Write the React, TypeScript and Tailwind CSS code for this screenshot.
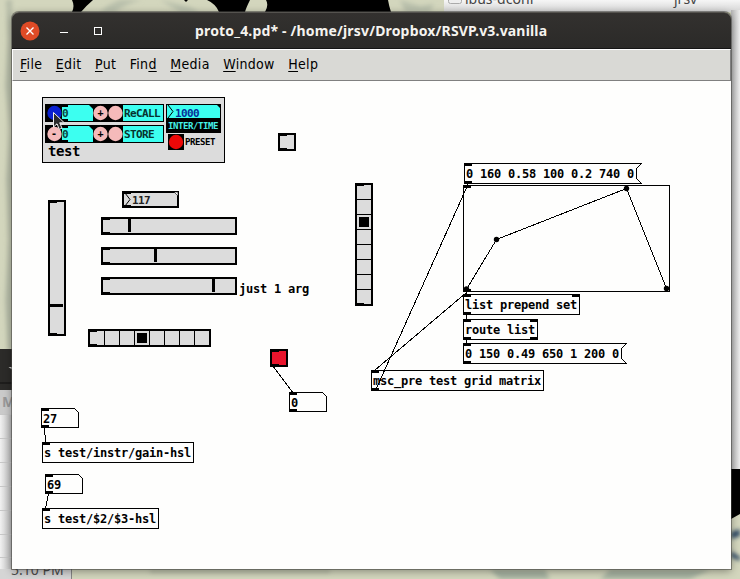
import React from "react";

const mono = "font-['DejaVu_Sans_Mono','Liberation_Mono',monospace] font-bold text-black whitespace-pre";

function Iolet({ className }: { className: string }) {
  return <i className={`absolute block h-[3px] w-[8px] bg-black ${className}`} />;
}

function ObjectBox({ className, label, outs = "bottom-[-1px] left-[-1px]", extra }: { className: string; label: string; outs?: string; extra?: React.ReactNode }) {
  return (
    <div className={`absolute h-[21px] border border-black pl-px text-[12px] leading-[21px] tracking-[-0.224px] ${mono} ${className}`}>
      {label}
      <Iolet className="-left-px -top-px" />
      {outs && <Iolet className={outs} />}
      {extra}
    </div>
  );
}

function NumberBox({ className, value }: { className: string; value: string }) {
  return (
    <div className={`absolute h-[20px] w-[38px] pl-[2px] text-[12px] leading-[22px] tracking-[-0.224px] ${mono} ${className}`}>
      <svg className="absolute inset-0" width="38" height="20" fill="none" stroke="#000" shapeRendering="crispEdges">
        <path d="M.5 .5H33.5L37.5 4.5V19.5H.5Z" />
      </svg>
      {value}
      <Iolet className="left-0 top-0" />
      <Iolet className="bottom-0 left-0" />
    </div>
  );
}

function MessageBox({ className, label, width }: { className: string; label: string; width: number }) {
  return (
    <div className={`absolute h-[21px] pl-[2px] text-[12px] leading-[22px] tracking-[-0.224px] ${mono} ${className}`}>
      <svg className="absolute inset-0" width={width} height="21" fill="none" stroke="#000" shapeRendering="crispEdges">
        <path d={`M.5 .5H${width - 0.5}L${width - 5.5} 5.5V15.5L${width - 0.5} 20.5H.5Z`} />
      </svg>
      {label}
      <Iolet className="left-0 top-0" />
      <Iolet className="bottom-0 left-0" />
    </div>
  );
}

function Widget({ className, children }: { className: string; children?: React.ReactNode }) {
  return (
    <div className={`absolute border-2 border-black bg-[#dcdcdc] ${className}`}>
      <Iolet className="-left-[1px] -top-[2px]" />
      <Iolet className="-bottom-[2px] -left-[1px]" />
      {children}
    </div>
  );
}

function Bang({ fill, sign, size = "w-[15px]" }: { fill: string; sign?: string; size?: string }) {
  return (
    <div className={`grid h-[16px] place-items-center bg-black ${size}`}>
      <svg className="col-start-1 row-start-1" width="15" height="16" viewBox="0 0 15 16">
        <circle cx="7.5" cy="8" r="7.2" fill={fill} />
      </svg>
      <span className={`z-10 col-start-1 row-start-1 text-[10px] leading-[16px] ${mono}`}>{sign}</span>
    </div>
  );
}

function PresetRow({ first, sign, label }: { first: string; sign?: string; label: string }) {
  return (
    <div className="flex h-[18px] w-[119px] border border-black bg-[#3cfff0]">
      <Bang fill={first} sign={sign} size="w-[16px]" />
      <div className={`relative w-[31px] text-[11px] leading-[17px] ${mono}`}>
        <i className="absolute left-0 top-0 h-[2px] w-[6px] bg-black" />
        <i className="absolute bottom-0 left-0 h-[2px] w-[6px] bg-black" />
        <svg className="absolute right-0 top-0" width="4" height="4"><path d="M0 0H4V4Z" /></svg>
        <span className="text-[#0b4540]">0</span>
      </div>
      <Bang fill="#f5baba" sign="+" />
      <Bang fill="#f5baba" />
      <span className={`pl-[1px] text-[11px] leading-[17px] tracking-[-0.62px] ${mono} !text-[#06332f]`}>{label}</span>
    </div>
  );
}

function Preset() {
  return (
    <div className="absolute left-[30px] top-[16px] h-[66px] w-[183px] border border-black bg-[#dcdcdc] pl-[2px] pt-[6px]">
      <div className="flex gap-[2px]">
        <div className="flex flex-col gap-[3px]">
          <PresetRow first="#0a20d0" label="ReCALL" />
          <PresetRow first="#f5baba" sign="-" label="STORE" />
          <div className={`-mt-[3px] pl-[3px] text-[14px] leading-[16px] tracking-[-0.43px] ${mono}`}>test</div>
        </div>
        <div className="flex w-[55px] flex-col">
          <div className={`relative h-[15px] border border-black bg-[#3cfff0] pl-[8px] text-[11px] leading-[17px] tracking-[-0.62px] ${mono} !text-[#08309a]`}>
            <svg className="absolute left-0 top-0" width="7" height="13" fill="none" stroke="#000"><path d="M1 0L6 6.5L1 13" /></svg>
            <svg className="absolute right-0 top-0" width="3" height="3"><path d="M0 0H3V3Z" /></svg>
            1000
          </div>
          <div className="h-[14px] bg-black pl-[2px] font-['DejaVu_Sans_Mono',monospace] text-[9px] font-bold leading-[14px] tracking-[-0.42px] text-[#45f0e6]">INTER/TIME</div>
          <div className="flex h-[17px] items-start pl-[2px] pt-px">
            <div className="h-[16px] w-[16px] shrink-0 bg-black">
              <svg width="16" height="16"><circle cx="8" cy="8" r="7.2" fill="#ec0808" /></svg>
            </div>
            <span className={`pl-px text-[9px] leading-[16px] tracking-[-0.42px] ${mono}`}>PRESET</span>
          </div>
        </div>
      </div>
      <svg className="absolute left-[9px] top-[13px]" width="16" height="22">
        <path d="M1.5 1.5V16L5 12.8L7.3 18.3L10 17.2L7.7 11.8H12.3Z" fill="#2b2b2b" stroke="#eee" strokeWidth="1" />
      </svg>
    </div>
  );
}

function RadioCells({ vertical }: { vertical?: boolean }) {
  return (
    <div className={`flex h-full w-full ${vertical ? "flex-col" : ""}`}>
      {[0, 1, 2, 3, 4, 5, 6, 7].map((n) => (
        <div
          key={n}
          className={`flex shrink-0 items-center justify-center border-black ${vertical ? "h-[15px] w-[14px]" : "h-[14px] w-[15px]"} ${n < 7 ? (vertical ? "border-b" : "border-r") : ""}`}
        >
          {n === (vertical ? 2 : 3) && <i className="block h-[10px] w-[10px] bg-black" />}
        </div>
      ))}
    </div>
  );
}

function Desktop() {
  return (
    <svg className="absolute inset-0" width="740" height="579">
      <defs>
        <filter id="soft"><feGaussianBlur stdDeviation="2.2" /></filter>
        <linearGradient id="edge" x1="0" x2="1"><stop offset="0" stopColor="#f1f1f1" /><stop offset="1" stopColor="#b7b7b7" /></linearGradient>
        <linearGradient id="edgeR" x1="0" x2="1"><stop offset="0" stopColor="#b5b5b5" /><stop offset="1" stopColor="#ededed" /></linearGradient>
        <linearGradient id="top" x1="0" x2="0" y1="0" y2="1"><stop offset="0" stopColor="#f6f6f6" /><stop offset="1" stopColor="#d4d4d4" /></linearGradient>
      </defs>
      <rect width="740" height="579" fill="#d3d6bd" />
      <g filter="url(#soft)">
        <path d="M6 0L8 40L5 86L10 130L6 180L9 240L5 300L8 350H12V0Z" fill="#b6bca8" />
        <path d="M100 12Q110 3 120 0H142Q125 4 115 12ZM160 0L190 7L200 12H180ZM400 0L420 6L434 4L430 12H405Z" fill="#b9c0ac" />
        <path d="M490 570H545L550 579H500ZM610 570H710L690 579H600Z" fill="#a6b2a1" />
        <path d="M150 570H330V573H150Z" fill="#b4b9a4" />
      </g>
      <path d="M72 0H93Q87 5 81 12H72Q75 6 72 0ZM184 0H188L186 2ZM207 0H250Q246 8 245 12H219Q216 4 207 0ZM266 0Q269 5 265 12H391Q389 6 388 0Z" fill="#000" />
      <rect x="444" width="296" height="12" fill="url(#top)" />
      <rect x="731" y="10" width="9" height="460" fill="url(#edgeR)" />
      <path d="M731 469H740V514L731 519Z" fill="#000" />
      <g filter="url(#soft)"><path d="M731 532L740 529V536L731 539ZM731 551L740 557V561L731 557Z" fill="#2f4a66" /></g>
      <rect y="349" width="12" height="41" fill="#2c2b29" />
      <path d="M0 383H12" stroke="#111" />
      <path d="M8.5 367H12V369.5Z" fill="#ccc" />
      <rect y="390" width="12" height="25" fill="#cacaca" />
      <rect y="415" width="12" height="164" fill="url(#edge)" />
      <rect y="569" width="72" height="10" fill="#d5d5d5" />
      <path d="M71.5 569V579" stroke="#858585" />
      <path d="M0 414.500H12M0 438.500H12M0 462.500H12M0 486.500H12M0 510.500H12M0 534.500H12M0 557.500H12" stroke="#c7c7c7" />
      <rect x="448.500" y="-7.500" width="13" height="11" rx="2" fill="#eee" stroke="#aaa" />
      <path d="M453 -.5H458" stroke="#aaa" />
    </svg>
  );
}

const menus = [
  ["", "F", "ile"],
  ["", "E", "dit"],
  ["", "P", "ut"],
  ["Fin", "d", ""],
  ["", "M", "edia"],
  ["", "W", "indow"],
  ["", "H", "elp"],
];

export default function App() {
  return (
    <div className="relative h-[579px] w-[740px] overflow-hidden">
      <Desktop />
      <span className="absolute left-[465px] top-[-10px] font-['Noto_Sans',sans-serif] text-[14px] leading-[18px] text-[#444]">ibus-dconf</span>
      <span className="absolute left-[674px] top-[-10px] font-['Noto_Sans',sans-serif] text-[14px] leading-[18px] text-[#444]">jrsv</span>
      <span className="absolute left-[2px] top-[393px] font-['Noto_Sans',sans-serif] text-[14px] font-bold leading-[18px] text-[#999]">M</span>
      <span className="absolute left-[11px] top-[561px] font-['Noto_Sans',sans-serif] text-[14px] leading-[18px] text-[#4a4a4a]">5:10 PM</span>

      <div className="absolute left-[12px] top-[12px] flex h-[557px] w-[719px] flex-col rounded-t-[7px] shadow-[0_0_0_1px_rgba(70,70,65,0.55),0_2px_9px_rgba(0,0,0,0.4)]">
        <div className="flex h-[37px] items-center rounded-t-[7px] border-b border-t border-b-[#151515] border-t-[#55534f] bg-gradient-to-b from-[#33312f] to-[#2b2a28] pl-[8px]">
          <svg width="20" height="20" className="shrink-0">
            <circle cx="10" cy="10" r="9.500" fill="#df4b26" />
            <path d="M6.500 6.500L13.500 13.500M13.500 6.500L6.500 13.500" stroke="#fff" strokeWidth="1.400" />
          </svg>
          <i className="ml-[20px] mt-[4px] block h-px w-[8px] bg-white" />
          <i className="ml-[26px] block h-[8px] w-[8px] border border-white" />
          <span className="ml-[93px] whitespace-nowrap font-['Noto_Sans',sans-serif] text-[14px] font-bold leading-[20px] tracking-[0.17px] text-[#f5f3ef]">proto_4.pd* - /home/jrsv/Dropbox/RSVP.v3.vanilla</span>
        </div>
        <div className="flex h-[32px] gap-[13.5px] border-b border-l border-r border-t border-b-[#808080] border-l-white border-r-[#808080] border-t-white bg-[#d9d9d5] pl-[7px] font-['DejaVu_Sans_Condensed','DejaVu_Sans',sans-serif] text-[14px] leading-[28px] tracking-[0.32px] text-black [font-stretch:condensed]">
          {menus.map(([before, key, after]) => (
            <span key={before + key + after}>
              {before}
              <span className="underline decoration-1 underline-offset-2 [text-decoration-skip-ink:none]">{key}</span>
              {after}
            </span>
          ))}
        </div>

        <div className="relative flex-1 overflow-hidden bg-[#fefefd]">
          <Preset />
          <Widget className="left-[266px] top-[52px] h-[18px] w-[18px]" />
          <Widget className="left-[36px] top-[119px] h-[136px] w-[18px]">
            <i className="mt-[102px] block h-[3px] w-[13px] bg-black" />
          </Widget>
          <Widget className="left-[110px] top-[110px] h-[17px] w-[57px]">
            <svg className="absolute left-0 top-0" width="7" height="13" fill="none" stroke="#000"><path d="M1 0L6 6.500L1 13" /></svg>
            <svg className="absolute -right-px -top-px" width="4" height="4"><path d="M0 0H4V4Z" fill="#fff" stroke="#000" strokeWidth=".6" /></svg>
            <div className={`pl-[8px] text-[11px] leading-[15px] tracking-[-0.62px] ${mono} !text-[#222]`}>117</div>
          </Widget>
          <Widget className="left-[89px] top-[136px] h-[18px] w-[136px]"><i className="ml-[25px] block h-[13px] w-[3px] bg-black" /></Widget>
          <Widget className="left-[89px] top-[166px] h-[18px] w-[136px]"><i className="ml-[51px] block h-[13px] w-[3px] bg-black" /></Widget>
          <Widget className="left-[89px] top-[196px] h-[18px] w-[136px]"><i className="ml-[109px] block h-[13px] w-[3px] bg-black" /></Widget>
          <span className={`absolute left-[227px] top-[198px] text-[12px] leading-[20px] tracking-[-0.224px] ${mono}`}>just 1 arg</span>
          <Widget className="left-[76px] top-[248px] h-[18px] w-[123px]"><RadioCells /></Widget>
          <Widget className="left-[343px] top-[102px] h-[123px] w-[18px]"><RadioCells vertical /></Widget>

          <div className="absolute left-[258px] top-[268px] h-[18px] w-[18px] border-2 border-black bg-[#e9142c]">
            <Iolet className="-left-px -top-[2px]" />
            <Iolet className="-bottom-[2px] -left-px" />
          </div>
          <NumberBox className="left-[277px] top-[311px]" value="0" />
          <NumberBox className="left-[29px] top-[327px]" value="27" />
          <NumberBox className="left-[33px] top-[393px]" value="69" />
          <ObjectBox className="left-[30px] top-[361px] w-[152px]" label="s test/instr/gain-hsl" outs="" />
          <ObjectBox className="left-[30px] top-[427px] w-[117px]" label="s test/$2/$3-hsl" outs="" />

          <MessageBox className="left-[452px] top-[82px] w-[178px]" width={178} label="0 160 0.58 100 0.2 740 0" />
          <MessageBox className="left-[451px] top-[262px] w-[164px]" width={164} label="0 150 0.49 650 1 200 0" />
          <ObjectBox className="left-[451px] top-[213px] w-[117px]" label="list prepend set" extra={<Iolet className="-right-px -top-px" />} />
          <ObjectBox className="left-[451px] top-[238px] w-[75px]" label="route list" extra={<><Iolet className="-right-px -top-px" /><Iolet className="-bottom-px -right-px" /></>} />
          <ObjectBox className="left-[359px] top-[289px] w-[173px]" label="msc_pre test grid matrix" />
          <div className="absolute left-[451px] top-[104px] h-[107px] w-[207px] border border-black">
            <Iolet className="-left-px -top-px" />
            <Iolet className="-bottom-px -left-px" />
          </div>

          <svg className="absolute left-0 top-0" width="719" height="488" fill="none" stroke="#000">
            <g shapeRendering="crispEdges">
              <path d="M454.500 208.500L484.500 158.500L614.500 107.500L654.500 207.500" />
              <path d="M363.500 309.500L455.500 104.500M362.500 289.500L454.500 211.500" />
              <path d="M454.500 211V213M454.500 234V238M454.500 259V262M455.500 102V105" />
              <path d="M32.500 347L33.500 361M36.500 413L33.500 427M261.500 286L280.500 311" />
            </g>
            <g fill="#000" stroke="none">
              <circle cx="454.500" cy="208" r="2.700" />
              <circle cx="484.500" cy="158.500" r="2.700" />
              <circle cx="614.500" cy="107.500" r="2.700" />
              <circle cx="654.500" cy="207.500" r="2.700" />
            </g>
          </svg>
        </div>
      </div>
    </div>
  );
}
